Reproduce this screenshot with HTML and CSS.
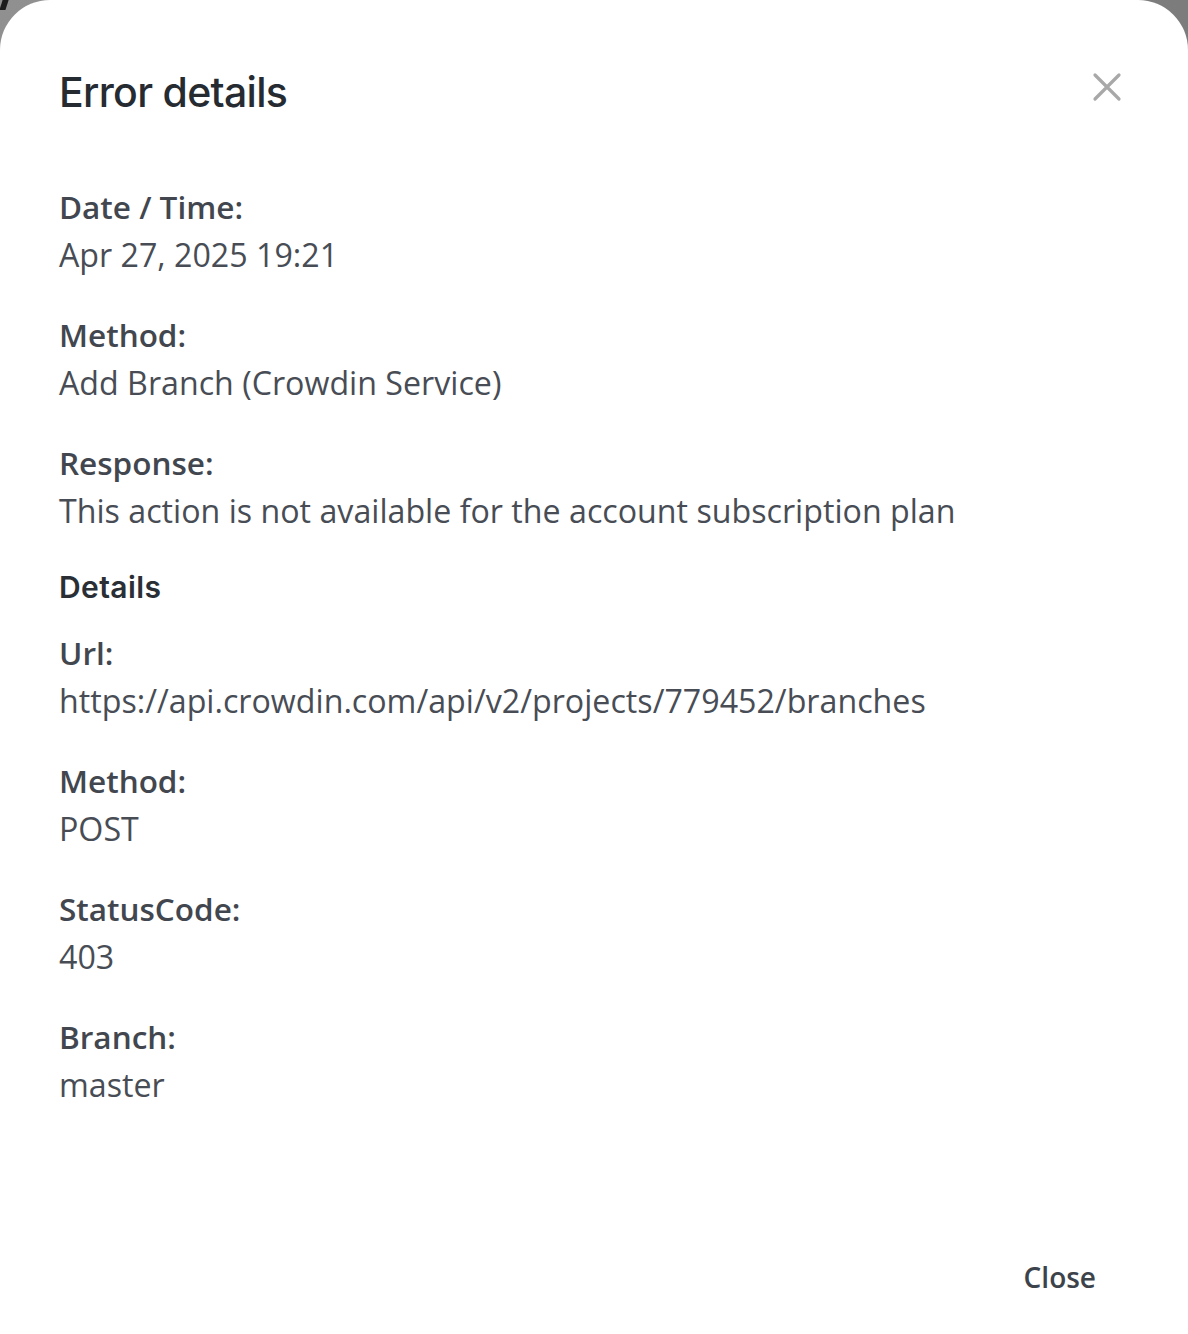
FILE: index.html
```html
<!DOCTYPE html>
<html lang="en">
<head>
<meta charset="utf-8">
<title>Error details</title>
<link rel="stylesheet" href="styles.css">
</head>
<body>
<div class="backdrop">
  <span class="behind-mark"></span>
  <div class="modal">
    <header class="modal-header">
      <h1 class="modal-title">Error details</h1>
      <button class="icon-close" aria-label="Close">
        <svg width="30" height="30" viewBox="0 0 30 30"><path d="M3 3L27 27M27 3L3 27" stroke="#a8a8a8" stroke-width="3.2" stroke-linecap="round" fill="none"/></svg>
      </button>
    </header>
    <div class="modal-body">
      <div class="field"><div class="label">Date / Time:</div><div class="value">Apr 27, 2025 19:21</div></div>
      <div class="field"><div class="label">Method:</div><div class="value">Add Branch (Crowdin Service)</div></div>
      <div class="field"><div class="label">Response:</div><div class="value">This action is not available for the account subscription plan</div></div>
      <h2 class="section-title">Details</h2>
      <div class="field"><div class="label">Url:</div><div class="value">https://api.crowdin.com/api/v2/projects/779452/branches</div></div>
      <div class="field"><div class="label">Method:</div><div class="value">POST</div></div>
      <div class="field"><div class="label">StatusCode:</div><div class="value">403</div></div>
      <div class="field"><div class="label">Branch:</div><div class="value">master</div></div>
    </div>
    <footer class="modal-footer">
      <button class="btn-text">Close</button>
    </footer>
  </div>
</div>
</body>
</html>
```
FILE: styles.css
```css
html, body {
  margin: 0;
  padding: 0;
  height: 100%;
}
body {
  background: linear-gradient(90deg, #909090 0%, #8a8a8a 50%, #7c7c7c 100%);
  font-family: "Open Sans", "Liberation Sans", sans-serif;
  overflow: hidden;
}
.backdrop {
  position: relative;
  height: 100%;
}
.behind-mark {
  position: absolute;
  left: 2px;
  top: -6px;
  width: 6px;
  height: 16px;
  background: #1c1c1c;
  transform: skewX(-18deg);
}
.modal {
  position: relative;
  background: #fff;
  border-radius: 50px 50px 0 0;
  height: 100%;
  box-sizing: border-box;
  padding: 68px 60px 0 59px;
  display: flex;
  flex-direction: column;
}
.modal-header {
  display: flex;
  justify-content: space-between;
  align-items: flex-start;
}
.modal-title {
  margin: 0;
  font-family: Inter, "Noto Sans", sans-serif;
  font-weight: 500;
  font-size: 41px;
  line-height: 48px;
  letter-spacing: -0.7px;
  color: #262b32;
}
.icon-close {
  border: 0;
  background: none;
  padding: 0;
  margin: 4px 6px 0 0;
  width: 30px;
  height: 30px;
  cursor: pointer;
}
.modal-body {
  margin-top: 67px;
  display: flex;
  flex-direction: column;
}
.field {
  margin-bottom: 32px;
  font-size: 32.2px;
  line-height: 48px;
}
.field:last-child { margin-bottom: 0; }
.label {
  font-weight: 600;
  font-size: 31.5px;
  color: #42474f;
}
.value {
  font-weight: 400;
  color: #484d55;
}
.section-title {
  margin: -4px 0 18px 0;
  font-family: Inter, "Noto Sans", sans-serif;
  font-weight: 600;
  font-size: 30px;
  line-height: 48px;
  letter-spacing: 0.4px;
  color: #2a2f36;
}
.modal-footer {
  margin-top: auto;
  display: flex;
  justify-content: flex-end;
  padding: 0 32px 33px 0;
}
.btn-text {
  border: 0;
  background: none;
  padding: 0;
  font-family: "Open Sans", "Liberation Sans", sans-serif;
  font-weight: 600;
  font-size: 28px;
  line-height: 48px;
  color: #3d434b;
  cursor: pointer;
}
```
